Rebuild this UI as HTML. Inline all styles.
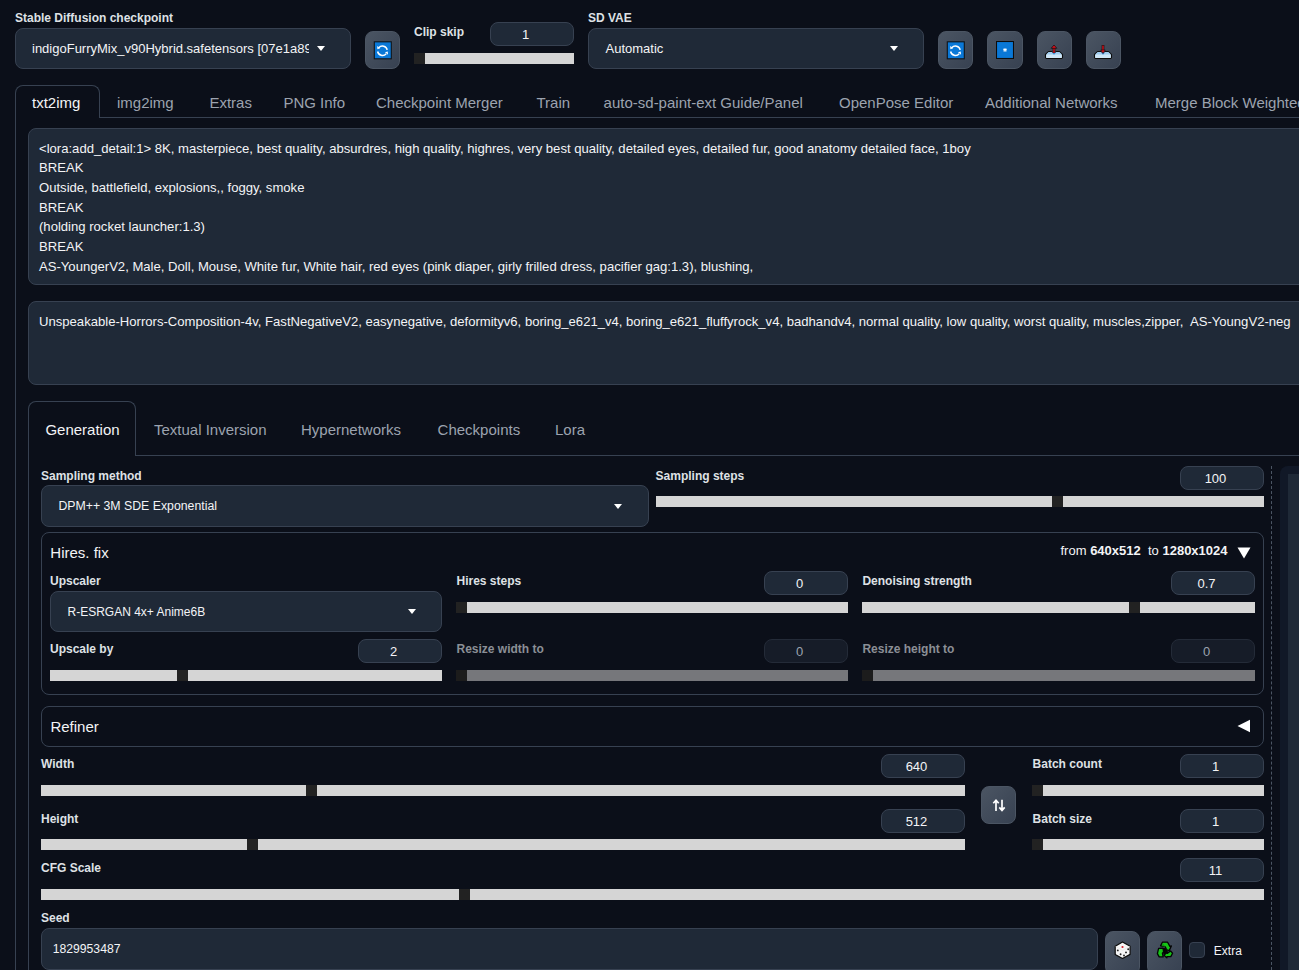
<!DOCTYPE html>
<html><head><meta charset="utf-8"><style>
html,body{margin:0;padding:0;width:1299px;height:970px;overflow:hidden;background:#0b0f19;}
body{position:relative;font-family:"Liberation Sans",sans-serif;}
.a{position:absolute;box-sizing:border-box;}
.t{white-space:pre;}
.btn{background:linear-gradient(to bottom right,#4b5563,#374151);border:1px solid #4b5563;border-radius:8px;}
</style></head><body>
<div class="a t" style="left:15px;top:12.14px;font-size:12px;line-height:12px;font-weight:700;color:#dfe1e5;">Stable Diffusion checkpoint</div>
<div class="a" style="left:15px;top:28px;width:336px;height:41px;background:#1f2937;border:1px solid #374151;border-radius:8px;"></div>
<div class="a t" style="left:32px;top:42.00px;font-size:13px;line-height:13px;font-weight:400;color:#f3f4f6;width:277px;overflow:hidden;white-space:nowrap;padding-bottom:4px;">indigoFurryMix_v90Hybrid.safetensors [07e1a89c5a]</div>
<div class="a" style="left:317px;top:46px;width:0;height:0;border-left:4.0px solid transparent;border-right:4.0px solid transparent;border-top:5px solid #fff;"></div>
<div class="a btn" style="left:365px;top:31px;width:35px;height:38px;"><svg width="18" height="18" viewBox="0 0 18 18" style="position:absolute;left:7px;top:9px;overflow:visible"><g transform="translate(0.8,0.3)"><rect x="0.5" y="0.5" width="17" height="17" fill="#0a78d7" stroke="#101418" stroke-width="1.1"/><path d="M5 6.4 A4.9 4.9 0 0 1 13.4 8.6" fill="none" stroke="#fff" stroke-width="1.5"/><path d="M3.8 10.2 A4.9 4.9 0 0 0 12.4 12.4" fill="none" stroke="#fff" stroke-width="1.5"/><path d="M3.4 4.6 L6.4 7 L3.6 8 Z" fill="#fff"/><path d="M14.2 13.4 L11.2 11 L14 10.1 Z" fill="#fff"/></g></svg></div>
<div class="a t" style="left:414px;top:26.34px;font-size:12px;line-height:12px;font-weight:700;color:#dfe1e5;">Clip skip</div>
<div class="a" style="left:490px;top:22px;width:84px;height:24px;background:#1f2937;border:1px solid #374151;border-radius:8px;"></div>
<div class="a t" style="left:483.50px;width:84px;text-align:center;top:28.00px;font-size:13px;line-height:13px;font-weight:400;color:#f3f4f6;">1</div>
<div class="a" style="left:414px;top:53px;width:160px;height:11px;background:#d5d5d5;"></div>
<div class="a" style="left:414px;top:53px;width:11px;height:11px;background:#222222;"></div>
<div class="a t" style="left:588px;top:12.14px;font-size:12px;line-height:12px;font-weight:700;color:#dfe1e5;">SD VAE</div>
<div class="a" style="left:588px;top:28px;width:336px;height:41px;background:#1f2937;border:1px solid #374151;border-radius:8px;"></div>
<div class="a t" style="left:605.5px;top:42.00px;font-size:13px;line-height:13px;font-weight:400;color:#f3f4f6;">Automatic</div>
<div class="a" style="left:890px;top:46px;width:0;height:0;border-left:4.0px solid transparent;border-right:4.0px solid transparent;border-top:5px solid #fff;"></div>
<div class="a btn" style="left:938px;top:31px;width:35px;height:38px;"><svg width="18" height="18" viewBox="0 0 18 18" style="position:absolute;left:7px;top:9px;overflow:visible"><g transform="translate(0.8,0.3)"><rect x="0.5" y="0.5" width="17" height="17" fill="#0a78d7" stroke="#101418" stroke-width="1.1"/><path d="M5 6.4 A4.9 4.9 0 0 1 13.4 8.6" fill="none" stroke="#fff" stroke-width="1.5"/><path d="M3.8 10.2 A4.9 4.9 0 0 0 12.4 12.4" fill="none" stroke="#fff" stroke-width="1.5"/><path d="M3.4 4.6 L6.4 7 L3.6 8 Z" fill="#fff"/><path d="M14.2 13.4 L11.2 11 L14 10.1 Z" fill="#fff"/></g></svg></div>
<div class="a btn" style="left:987px;top:31px;width:36px;height:38px;"><svg width="18" height="18" viewBox="0 0 18 18" style="position:absolute;left:8px;top:9.3px"><rect x="0.5" y="0.5" width="17" height="17" fill="#0a78d7" stroke="#0d0d0d" stroke-width="1.1"/><path d="M9 7.2 v3.6 M7.3 8.1 l3.4 1.8 M10.7 8.1 l-3.4 1.8" stroke="#fff" stroke-width="1.1"/></svg></div>
<div class="a btn" style="left:1037px;top:31px;width:35px;height:38px;"><svg width="20" height="20" viewBox="0 0 20 20" style="position:absolute;left:6.2px;top:8.3px"><path d="M1.5 14.5 L4.6 11.6 H7.6 Q10 13.6 12.4 11.6 H15.4 L18.5 14.5 V17.6 Q18.5 18.5 17.6 18.5 H2.4 Q1.5 18.5 1.5 17.6 Z" fill="#cfe7f8" stroke="#0d0d0d" stroke-width="1.1"/><path d="M2 14.6 L4.8 12.1 H7.5 Q10 14.2 12.5 12.1 H15.2 L18 14.6 Z" fill="#9fcdf0"/><circle cx="10" cy="13.1" r="1.3" fill="#3d8fd6"/><path d="M10 13 V7.5" stroke="#0d0d0d" stroke-width="2.6"/><path d="M10 13 V7.5" stroke="#e0101c" stroke-width="1.4"/><path d="M7.2 8.3 L10 5 L12.8 8.3 Z" fill="#e0101c" stroke="#0d0d0d" stroke-width="0.7"/></svg></div>
<div class="a btn" style="left:1086px;top:31px;width:35px;height:38px;"><svg width="20" height="20" viewBox="0 0 20 20" style="position:absolute;left:6.2px;top:8.3px"><path d="M1.5 14.5 L4.6 11.6 H7.6 Q10 13.6 12.4 11.6 H15.4 L18.5 14.5 V17.6 Q18.5 18.5 17.6 18.5 H2.4 Q1.5 18.5 1.5 17.6 Z" fill="#cfe7f8" stroke="#0d0d0d" stroke-width="1.1"/><path d="M2 14.6 L4.8 12.1 H7.5 Q10 14.2 12.5 12.1 H15.2 L18 14.6 Z" fill="#9fcdf0"/><circle cx="10" cy="13.1" r="1.3" fill="#3d8fd6"/><path d="M10 5 V11" stroke="#0d0d0d" stroke-width="2.6"/><path d="M10 5.6 V11" stroke="#e0101c" stroke-width="1.4"/><path d="M7.8 10 L10 13.4 L12.2 10 Z" fill="#e0101c" stroke="#0d0d0d" stroke-width="0.6"/></svg></div>
<div class="a" style="left:15px;top:85px;width:85px;height:33px;border:1px solid #374151;border-bottom:none;border-radius:8px 8px 0 0;background:#0b0f19"></div>
<div class="a" style="left:100px;top:117px;width:1199px;height:1px;background:#374151;"></div>
<div class="a" style="left:15px;top:118px;width:1px;height:852px;background:#374151;"></div>
<div class="a t" style="left:32px;top:95.30px;font-size:15px;line-height:15px;font-weight:400;color:#f3f4f6;">txt2img</div>
<div class="a t" style="left:117px;top:95.30px;font-size:15px;line-height:15px;font-weight:400;color:#9ca3af;">img2img</div>
<div class="a t" style="left:209.4px;top:95.30px;font-size:15px;line-height:15px;font-weight:400;color:#9ca3af;">Extras</div>
<div class="a t" style="left:283.4px;top:95.30px;font-size:15px;line-height:15px;font-weight:400;color:#9ca3af;">PNG Info</div>
<div class="a t" style="left:376px;top:95.30px;font-size:15px;line-height:15px;font-weight:400;color:#9ca3af;">Checkpoint Merger</div>
<div class="a t" style="left:536.5px;top:95.30px;font-size:15px;line-height:15px;font-weight:400;color:#9ca3af;">Train</div>
<div class="a t" style="left:603.6px;top:95.30px;font-size:15px;line-height:15px;font-weight:400;color:#9ca3af;">auto-sd-paint-ext Guide/Panel</div>
<div class="a t" style="left:839px;top:95.30px;font-size:15px;line-height:15px;font-weight:400;color:#9ca3af;">OpenPose Editor</div>
<div class="a t" style="left:985px;top:95.30px;font-size:15px;line-height:15px;font-weight:400;color:#9ca3af;">Additional Networks</div>
<div class="a t" style="left:1155px;top:95.30px;font-size:15px;line-height:15px;font-weight:400;color:#9ca3af;">Merge Block Weighted</div>
<div class="a" style="left:28px;top:128px;width:1292px;height:157px;background:#1f2937;border:1px solid #374151;border-radius:8px;"></div>
<div class="a t" style="left:39px;top:141.71px;font-size:13.1px;line-height:13.1px;font-weight:400;color:#f3f4f6;">&lt;lora:add_detail:1&gt; 8K, masterpiece, best quality, absurdres, high quality, highres, very best quality, detailed eyes, detailed fur, good anatomy detailed face, 1boy</div>
<div class="a t" style="left:39px;top:161.39px;font-size:13.1px;line-height:13.1px;font-weight:400;color:#f3f4f6;">BREAK</div>
<div class="a t" style="left:39px;top:181.07px;font-size:13.1px;line-height:13.1px;font-weight:400;color:#f3f4f6;">Outside, battlefield, explosions,, foggy, smoke</div>
<div class="a t" style="left:39px;top:200.75px;font-size:13.1px;line-height:13.1px;font-weight:400;color:#f3f4f6;">BREAK</div>
<div class="a t" style="left:39px;top:220.43px;font-size:13.1px;line-height:13.1px;font-weight:400;color:#f3f4f6;">(holding rocket launcher:1.3)</div>
<div class="a t" style="left:39px;top:240.11px;font-size:13.1px;line-height:13.1px;font-weight:400;color:#f3f4f6;">BREAK</div>
<div class="a t" style="left:39px;top:259.79px;font-size:13.1px;line-height:13.1px;font-weight:400;color:#f3f4f6;">AS-YoungerV2, Male, Doll, Mouse, White fur, White hair, red eyes (pink diaper, girly frilled dress, pacifier gag:1.3), blushing,</div>
<div class="a" style="left:28px;top:301px;width:1292px;height:84px;background:#1f2937;border:1px solid #374151;border-radius:8px;"></div>
<div class="a t" style="left:39px;top:314.91px;font-size:13.1px;line-height:13.1px;font-weight:400;color:#f3f4f6;">Unspeakable-Horrors-Composition-4v, FastNegativeV2, easynegative, deformityv6, boring_e621_v4, boring_e621_fluffyrock_v4, badhandv4, normal quality, low quality, worst quality, muscles,zipper,&nbsp; AS-YoungV2-neg</div>
<div class="a" style="left:28px;top:401px;width:108px;height:55px;border:1px solid #374151;border-bottom:none;border-radius:8px 8px 0 0;background:#0b0f19"></div>
<div class="a" style="left:136px;top:455px;width:1163px;height:1px;background:#374151;"></div>
<div class="a" style="left:28px;top:456px;width:1px;height:514px;background:#374151;"></div>
<div class="a t" style="left:45.4px;top:422.30px;font-size:15px;line-height:15px;font-weight:400;color:#f3f4f6;">Generation</div>
<div class="a t" style="left:154px;top:422.30px;font-size:15px;line-height:15px;font-weight:400;color:#9ca3af;">Textual Inversion</div>
<div class="a t" style="left:301px;top:422.30px;font-size:15px;line-height:15px;font-weight:400;color:#9ca3af;">Hypernetworks</div>
<div class="a t" style="left:437.6px;top:422.30px;font-size:15px;line-height:15px;font-weight:400;color:#9ca3af;">Checkpoints</div>
<div class="a t" style="left:555px;top:422.30px;font-size:15px;line-height:15px;font-weight:400;color:#9ca3af;">Lora</div>
<div class="a t" style="left:41px;top:469.84px;font-size:12px;line-height:12px;font-weight:700;color:#dfe1e5;">Sampling method</div>
<div class="a" style="left:41px;top:485px;width:608px;height:42px;background:#1f2937;border:1px solid #374151;border-radius:8px;"></div>
<div class="a t" style="left:58.4px;top:499.89px;font-size:12.3px;line-height:12.3px;font-weight:400;color:#f3f4f6;">DPM++ 3M SDE Exponential</div>
<div class="a" style="left:614px;top:504px;width:0;height:0;border-left:4.0px solid transparent;border-right:4.0px solid transparent;border-top:5px solid #fff;"></div>
<div class="a t" style="left:655.6px;top:469.84px;font-size:12px;line-height:12px;font-weight:700;color:#dfe1e5;">Sampling steps</div>
<div class="a" style="left:1180px;top:466px;width:84px;height:24px;background:#1f2937;border:1px solid #374151;border-radius:8px;"></div>
<div class="a t" style="left:1173.50px;width:84px;text-align:center;top:472.00px;font-size:13px;line-height:13px;font-weight:400;color:#f3f4f6;">100</div>
<div class="a" style="left:656px;top:496px;width:608px;height:11px;background:#d5d5d5;"></div>
<div class="a" style="left:1052px;top:496px;width:11px;height:11px;background:#222222;"></div>
<div class="a" style="left:41px;top:532px;width:1223px;height:163px;border:1px solid #374151;border-radius:8px;"></div>
<div class="a t" style="left:50.3px;top:545.30px;font-size:15px;line-height:15px;font-weight:400;color:#f3f4f6;">Hires. fix</div>
<div class="a t" style="left:1060.5px;top:544.00px;font-size:13px;line-height:13px;font-weight:400;color:#f3f4f6;">from <b>640x512</b>&nbsp; to <b>1280x1024</b></div>
<svg class="a" style="left:1237px;top:547px" width="14" height="12" viewBox="0 0 14 12"><path d="M0.5 0.5 H13.5 L7 11.5 Z" fill="#fff"/></svg>
<div class="a t" style="left:50px;top:574.84px;font-size:12px;line-height:12px;font-weight:700;color:#dfe1e5;">Upscaler</div>
<div class="a" style="left:50px;top:591px;width:392px;height:41px;background:#1f2937;border:1px solid #374151;border-radius:8px;"></div>
<div class="a t" style="left:67.5px;top:605.84px;font-size:12px;line-height:12px;font-weight:400;color:#f3f4f6;">R-ESRGAN 4x+ Anime6B</div>
<div class="a" style="left:408px;top:609px;width:0;height:0;border-left:4.0px solid transparent;border-right:4.0px solid transparent;border-top:5px solid #fff;"></div>
<div class="a t" style="left:50px;top:642.84px;font-size:12px;line-height:12px;font-weight:700;color:#dfe1e5;">Upscale by</div>
<div class="a" style="left:358px;top:639px;width:84px;height:24px;background:#1f2937;border:1px solid #374151;border-radius:8px;"></div>
<div class="a t" style="left:351.50px;width:84px;text-align:center;top:645.00px;font-size:13px;line-height:13px;font-weight:400;color:#f3f4f6;">2</div>
<div class="a" style="left:50px;top:670px;width:392px;height:11px;background:#d5d5d5;"></div>
<div class="a" style="left:177px;top:670px;width:11px;height:11px;background:#222222;"></div>
<div class="a t" style="left:456.5px;top:574.84px;font-size:12px;line-height:12px;font-weight:700;color:#dfe1e5;">Hires steps</div>
<div class="a" style="left:764px;top:571px;width:84px;height:24px;background:#1f2937;border:1px solid #374151;border-radius:8px;"></div>
<div class="a t" style="left:757.50px;width:84px;text-align:center;top:577.00px;font-size:13px;line-height:13px;font-weight:400;color:#f3f4f6;">0</div>
<div class="a" style="left:456px;top:602px;width:392px;height:11px;background:#d5d5d5;"></div>
<div class="a" style="left:456px;top:602px;width:11px;height:11px;background:#222222;"></div>
<div class="a t" style="left:456.5px;top:642.84px;font-size:12px;line-height:12px;font-weight:700;color:#8b8f96;">Resize width to</div>
<div class="a" style="left:764px;top:639px;width:84px;height:24px;background:#161c28;border:1px solid #242b38;border-radius:8px;"></div>
<div class="a t" style="left:757.50px;width:84px;text-align:center;top:645.00px;font-size:13px;line-height:13px;font-weight:400;color:#9ca3af;">0</div>
<div class="a" style="left:456px;top:670px;width:392px;height:11px;background:#76777b;"></div>
<div class="a" style="left:456px;top:670px;width:11px;height:11px;background:#1c1c1c;"></div>
<div class="a t" style="left:862.4px;top:574.84px;font-size:12px;line-height:12px;font-weight:700;color:#dfe1e5;">Denoising strength</div>
<div class="a" style="left:1171px;top:571px;width:84px;height:24px;background:#1f2937;border:1px solid #374151;border-radius:8px;"></div>
<div class="a t" style="left:1164.50px;width:84px;text-align:center;top:577.00px;font-size:13px;line-height:13px;font-weight:400;color:#f3f4f6;">0.7</div>
<div class="a" style="left:862px;top:602px;width:393px;height:11px;background:#d5d5d5;"></div>
<div class="a" style="left:1129px;top:602px;width:11px;height:11px;background:#222222;"></div>
<div class="a t" style="left:862.4px;top:642.84px;font-size:12px;line-height:12px;font-weight:700;color:#8b8f96;">Resize height to</div>
<div class="a" style="left:1171px;top:639px;width:84px;height:24px;background:#161c28;border:1px solid #242b38;border-radius:8px;"></div>
<div class="a t" style="left:1164.50px;width:84px;text-align:center;top:645.00px;font-size:13px;line-height:13px;font-weight:400;color:#9ca3af;">0</div>
<div class="a" style="left:862px;top:670px;width:393px;height:11px;background:#76777b;"></div>
<div class="a" style="left:862px;top:670px;width:11px;height:11px;background:#1c1c1c;"></div>
<div class="a" style="left:41px;top:706px;width:1223px;height:41px;border:1px solid #374151;border-radius:8px;"></div>
<div class="a t" style="left:50.4px;top:719.30px;font-size:15px;line-height:15px;font-weight:400;color:#f3f4f6;">Refiner</div>
<svg class="a" style="left:1237px;top:719px" width="14" height="14" viewBox="0 0 14 14"><path d="M13 0.8 V13.2 L0.5 7 Z" fill="#fff"/></svg>
<div class="a t" style="left:41px;top:757.84px;font-size:12px;line-height:12px;font-weight:700;color:#dfe1e5;">Width</div>
<div class="a" style="left:881px;top:754px;width:84px;height:24px;background:#1f2937;border:1px solid #374151;border-radius:8px;"></div>
<div class="a t" style="left:874.50px;width:84px;text-align:center;top:760.00px;font-size:13px;line-height:13px;font-weight:400;color:#f3f4f6;">640</div>
<div class="a" style="left:41px;top:785px;width:924px;height:11px;background:#d5d5d5;"></div>
<div class="a" style="left:306px;top:785px;width:11px;height:11px;background:#222222;"></div>
<div class="a t" style="left:41px;top:812.84px;font-size:12px;line-height:12px;font-weight:700;color:#dfe1e5;">Height</div>
<div class="a" style="left:881px;top:809px;width:84px;height:24px;background:#1f2937;border:1px solid #374151;border-radius:8px;"></div>
<div class="a t" style="left:874.50px;width:84px;text-align:center;top:815.00px;font-size:13px;line-height:13px;font-weight:400;color:#f3f4f6;">512</div>
<div class="a" style="left:41px;top:839px;width:924px;height:11px;background:#d5d5d5;"></div>
<div class="a" style="left:247px;top:839px;width:11px;height:11px;background:#222222;"></div>
<div class="a btn" style="left:981px;top:786px;width:35px;height:38px;"><svg width="14" height="13" viewBox="0 0 14 13" style="position:absolute;left:10.2px;top:12px"><path d="M4 12 V1.5 M1.3 4.3 L4 1.3 L6.7 4.3" fill="none" stroke="#fff" stroke-width="1.7"/><path d="M10 0.8 V11.2 M7.3 8.4 L10 11.4 L12.7 8.4" fill="none" stroke="#fff" stroke-width="1.7"/></svg></div>
<div class="a t" style="left:1032.6px;top:757.84px;font-size:12px;line-height:12px;font-weight:700;color:#dfe1e5;">Batch count</div>
<div class="a" style="left:1180px;top:754px;width:84px;height:24px;background:#1f2937;border:1px solid #374151;border-radius:8px;"></div>
<div class="a t" style="left:1173.50px;width:84px;text-align:center;top:760.00px;font-size:13px;line-height:13px;font-weight:400;color:#f3f4f6;">1</div>
<div class="a" style="left:1032px;top:785px;width:232px;height:11px;background:#d5d5d5;"></div>
<div class="a" style="left:1032px;top:785px;width:11px;height:11px;background:#222222;"></div>
<div class="a t" style="left:1032.6px;top:812.84px;font-size:12px;line-height:12px;font-weight:700;color:#dfe1e5;">Batch size</div>
<div class="a" style="left:1180px;top:809px;width:84px;height:24px;background:#1f2937;border:1px solid #374151;border-radius:8px;"></div>
<div class="a t" style="left:1173.50px;width:84px;text-align:center;top:815.00px;font-size:13px;line-height:13px;font-weight:400;color:#f3f4f6;">1</div>
<div class="a" style="left:1032px;top:839px;width:232px;height:11px;background:#d5d5d5;"></div>
<div class="a" style="left:1032px;top:839px;width:11px;height:11px;background:#222222;"></div>
<div class="a t" style="left:41px;top:861.84px;font-size:12px;line-height:12px;font-weight:700;color:#dfe1e5;">CFG Scale</div>
<div class="a" style="left:1180px;top:858px;width:84px;height:24px;background:#1f2937;border:1px solid #374151;border-radius:8px;"></div>
<div class="a t" style="left:1173.50px;width:84px;text-align:center;top:864.00px;font-size:13px;line-height:13px;font-weight:400;color:#f3f4f6;">11</div>
<div class="a" style="left:41px;top:889px;width:1223px;height:11px;background:#d5d5d5;"></div>
<div class="a" style="left:459px;top:889px;width:11px;height:11px;background:#222222;"></div>
<div class="a t" style="left:41px;top:911.64px;font-size:12px;line-height:12px;font-weight:700;color:#dfe1e5;">Seed</div>
<div class="a" style="left:41px;top:928px;width:1057px;height:42px;background:#1f2937;border:1px solid #374151;border-radius:8px;"></div>
<div class="a t" style="left:52.7px;top:942.87px;font-size:12.2px;line-height:12.2px;font-weight:400;color:#f3f4f6;">1829953487</div>
<div class="a btn" style="left:1105px;top:931px;width:35px;height:44px;"><svg width="18" height="19" viewBox="0 0 18 19" style="position:absolute;left:7px;top:9px"><path d="M9.5 0.9 L17.1 5.2 V13.4 L9.5 17.5 L2.2 13.4 V5.2 Z" fill="#f6f6f6" stroke="#0d0d0d" stroke-width="1.2" stroke-linejoin="round"/><path d="M2.6 5.4 L9.5 9.4 L16.8 5.4" fill="none" stroke="#e2e2e2" stroke-width="0.6"/><circle cx="9.5" cy="6" r="1.1" fill="#d0202a"/><circle cx="4.8" cy="9.4" r="0.95" fill="#222"/><circle cx="7.6" cy="13.3" r="0.95" fill="#222"/><circle cx="11" cy="14.5" r="0.95" fill="#222"/><circle cx="13" cy="11.4" r="0.95" fill="#222"/><circle cx="15.2" cy="8.3" r="0.95" fill="#222"/></svg></div>
<div class="a btn" style="left:1147px;top:931px;width:35px;height:44px;"><svg width="18" height="18" viewBox="0 0 18 18" style="position:absolute;left:7.8px;top:9.2px"><path d="M6.6 6.8 L11 7.6 L12 11.4 L8 14 L6.6 11 Z" fill="#050505"/><g fill="#16c416" stroke="#050505" stroke-width="1.3" stroke-linejoin="round"><path d="M6.4 1.2 H11.6 L13.9 5.4 L15.4 4.9 L13.2 9.6 L8.8 8.2 L10.2 7.6 L9 5.6 L4.6 4.9 Z"/><path d="M2.6 7.4 L7 7.2 L7.6 10.8 L6.4 12.2 L7.2 15.9 H3.2 L1.4 12.6 Z"/><path d="M8 14.2 L11 11.2 L11.2 12.4 L14.6 10 L16.6 12.2 L14.8 15.6 H11 L10.8 16.9 Z"/></g><path d="M6.8 2.2 L9.2 5.8 L5.8 5 Z" fill="#0f950f"/></svg></div>
<div class="a" style="left:1189px;top:942px;width:16px;height:16px;background:#1f2937;border:1px solid #374151;border-radius:4px;"></div>
<div class="a t" style="left:1213.8px;top:944.84px;font-size:12px;line-height:12px;font-weight:400;color:#f3f4f6;">Extra</div>
<div class="a" style="left:1271px;top:466px;width:0;height:504px;border-left:1px dashed #4b5563"></div>
<div class="a" style="left:1280px;top:466px;width:50px;height:514px;background:#111827;border-radius:8px;"></div>
<div class="a" style="left:1288px;top:474px;width:42px;height:506px;background:#1f2937;"></div>
</body></html>
